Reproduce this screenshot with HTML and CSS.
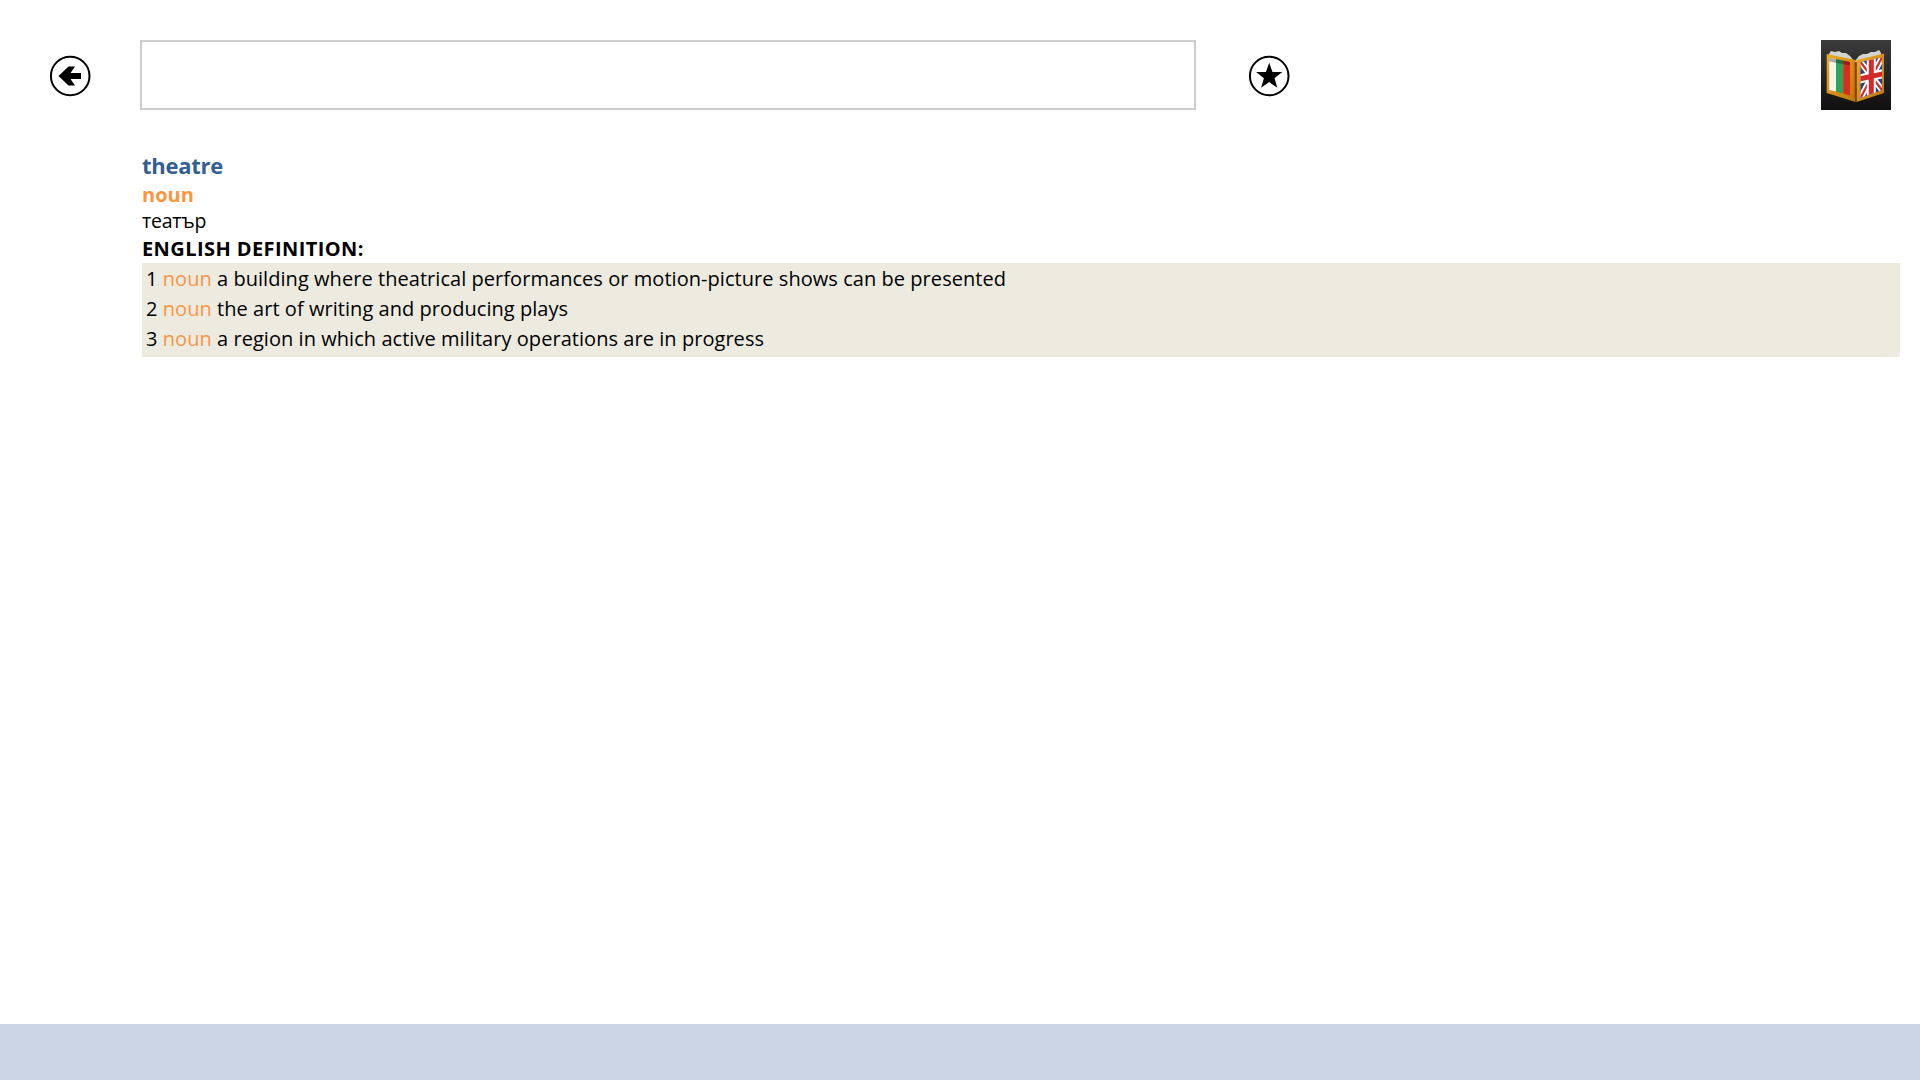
FILE: index.html
```html
<!DOCTYPE html>
<html lang="en">
<head>
<meta charset="utf-8">
<title>Dictionary</title>
<link rel="stylesheet" href="styles.css">
</head>
<body>
<div class="app">
  <header class="top">
    <button class="icon-btn back" aria-label="Back">
      <svg width="42" height="42" viewBox="0 0 42 42"><circle cx="21.200" cy="21" r="19.300" fill="#fff" stroke="#000" stroke-width="2"/><path d="M32 18H21.500L26 11.500h-6.500L9.500 21l10 9.500H26L21.500 24H32z" fill="#000"/></svg>
    </button>
    <input class="search" type="text" aria-label="Search">
    <button class="icon-btn star" aria-label="Favourite">
      <svg width="42" height="42" viewBox="0 0 42 42"><circle cx="21.200" cy="21" r="19.300" fill="#fff" stroke="#000" stroke-width="2"/><path d="M21.200 7.700L24.500 17h9.800l-7.800 6.200 2.800 9.500-8.100-5.600-8.100 5.600 2.800-9.500-7.800-6.200h9.800z" fill="#000"/></svg>
    </button>
    <svg class="logo" width="70" height="70" viewBox="0 0 70 70">
      <defs>
        <linearGradient id="bg" x1="0" y1="0" x2="0" y2="1"><stop offset="0" stop-color="#3c3c3c"/><stop offset="1" stop-color="#0f0f0f"/></linearGradient>
        <linearGradient id="gold" x1="0" y1="0" x2="1" y2="1"><stop offset="0" stop-color="#eeaa28"/><stop offset="1" stop-color="#bd760c"/></linearGradient>
        <clipPath id="rp"><path d="M39.500 22l21.500-4.500v32.500L39.500 58z"/></clipPath>
      </defs>
      <rect width="70" height="70" fill="url(#bg)"/>
      <path d="M8 14l2-3 4 1 4-1 3 2 4 0 4 3 4 5 1 0 4-5 4-2 4 0 4-2 4 0 4-2 2 3v3L35 22 8 17z" fill="#d4d4ce"/>
      <path d="M5.700 14l28.800 6v42L5.700 53z" fill="url(#gold)"/>
      <path d="M35.500 20L63 13.500V53l-27.500 9z" fill="url(#gold)"/>
      <path d="M33.500 22h1.700v36h-1.700z" fill="#a33a12"/>
      <path d="M8.300 18L15 19v32.500l-6.700-1.500z" fill="#f4f4ef"/>
      <path d="M15 19l7.300 1.500V53.500L15 51.500z" fill="#2fa35a"/>
      <path d="M22.300 20.500L29 22v33.500l-6.700-2z" fill="#dd2a1e"/>
      <path d="M8.300 18L29 22v3.500L8.300 21.500z" fill="#000" opacity=".3"/>
      <path d="M39.500 22l21.500-4.500v32.500L39.500 58z" fill="#27407f"/>
      <g clip-path="url(#rp)">
        <path d="M39.500 22L61 50M61 17.500L39.500 58" stroke="#fff" stroke-width="6"/>
        <path d="M39.500 22L61 50M61 17.500L39.500 58" stroke="#d42a2a" stroke-width="2.200"/>
        <path d="M50.300 14v46M36 39.500l27-6" stroke="#fff" stroke-width="9"/>
        <path d="M50.300 14v46M36 39.500l27-6" stroke="#d42a2a" stroke-width="5"/>
      </g>
    </svg>
  </header>
  <main class="entry">
    <div class="word">theatre</div>
    <div class="pos">noun</div>
    <div class="trans">театър</div>
    <div class="heading">ENGLISH DEFINITION:</div>
    <ol class="defs">
      <li>1 <span class="tag">noun</span> a building where theatrical performances or motion-picture shows can be presented</li>
      <li>2 <span class="tag">noun</span> the art of writing and producing plays</li>
      <li>3 <span class="tag">noun</span> a region in which active military operations are in progress</li>
    </ol>
  </main>
  <footer class="bar"></footer>
</div>
</body>
</html>
```
FILE: styles.css
```css
* { box-sizing: border-box; }
html, body { margin: 0; height: 100%; background: #fff; }
body { font-family: "Open Sans", "Noto Sans", sans-serif; color: #000; overflow: hidden; }
.app { height: 1080px; display: flex; flex-direction: column; }
.top { display: flex; align-items: center; padding: 40px 29px 0 49px; height: 110px; }
.icon-btn { width: 42px; height: 42px; padding: 0; border: 0; background: none; display: block; margin-top: 1px; }
.icon-btn svg { display: block; }
.search { width: 1056px; height: 70px; margin-left: 49px; border: 2px solid #cdcdcd; background: #fff; }
.star { margin-left: 52px; }
.logo { margin-left: auto; display: block; }
.entry { flex: 1; padding: 40px 20px 0 142px; }
.word { font-size: 22px; line-height: 30px; font-weight: 700; color: #355e91; letter-spacing: -0.25px; }
.pos { font-size: 20px; line-height: 27px; margin-top: 1px; font-weight: 700; color: #fb9542; }
.trans { font-size: 19.500px; line-height: 27px; margin-top: -1px; letter-spacing: -0.2px; }
.heading { font-size: 20px; line-height: 27px; margin: 1px 0; font-weight: 700; letter-spacing: 0.42px; }
.defs { list-style: none; margin: 0; padding: 1px 4px 3px; background: #edebe0; font-size: 20px; line-height: 30px; letter-spacing: 0.05px; height: 94px; }
.tag { color: #f79646; }
.bar { height: 56px; background: #cbd5e5; }
```
